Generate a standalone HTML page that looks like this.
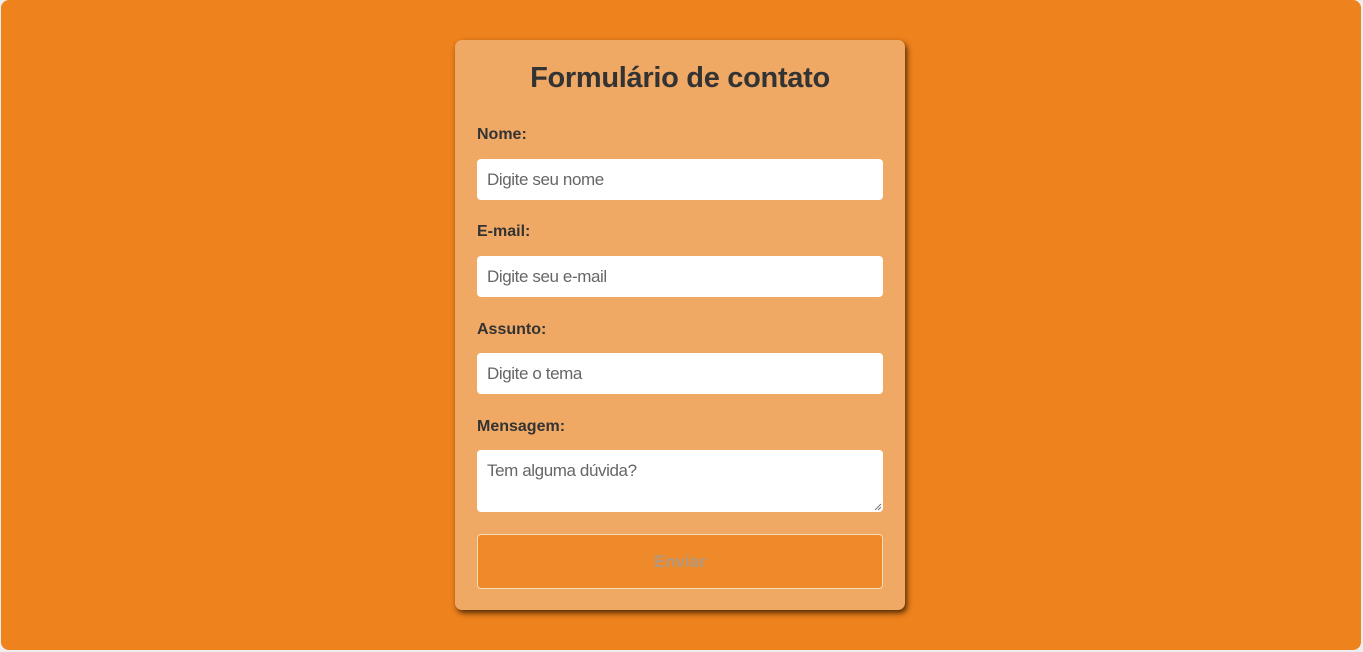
<!DOCTYPE html>
<html><head><style>
html,body{margin:0;padding:0;width:1363px;height:652px;background:#eeeeee;overflow:hidden;font-family:"Liberation Sans",sans-serif;}
.bg{position:absolute;left:1px;top:0;width:1360px;height:650px;background:#ee821c;border-radius:8px;}
.card{position:absolute;left:455px;top:40px;width:450px;height:570px;background:#efa965;border-radius:7px;box-shadow:2px 3px 6px rgba(50,25,0,.85);}
h1{position:absolute;left:0;width:450px;top:22px;margin:0;text-align:center;font-size:29px;font-weight:bold;color:#333;letter-spacing:-0.3px}
.l{position:absolute;left:22px;font-size:16px;font-weight:bold;color:#333;}
.i{position:absolute;left:22px;width:406px;height:41px;background:#fff;border-radius:4px;box-sizing:border-box;padding:0 10px;font-size:17px;color:#666;line-height:42px;letter-spacing:-0.4px}
.btn{position:absolute;left:22px;top:494px;width:406px;height:55px;box-sizing:border-box;border:1px solid #f8dcb8;border-radius:4px;background:#ee8a2a;color:#b3997d;font-size:17px;font-weight:bold;text-align:center;line-height:53px}
</style></head><body>
<div class="bg"></div>
<div class="card">
<h1>Formulário de contato</h1>
<div class="l" style="top:86px">Nome:</div>
<div class="i" style="top:119px">Digite seu nome</div>
<div class="l" style="top:183px">E-mail:</div>
<div class="i" style="top:216px">Digite seu e-mail</div>
<div class="l" style="top:281px">Assunto:</div>
<div class="i" style="top:313px">Digite o tema</div>
<div class="l" style="top:378px">Mensagem:</div>
<div class="i" style="top:410px;height:62px;line-height:normal;padding-top:11px">Tem alguma dúvida?
<svg style="position:absolute;right:1px;bottom:1px" width="8" height="8"><path d="M1 7L7 1M4 7L7 4" stroke="#777" stroke-width="1"/></svg></div>
<div class="btn">Enviar</div>
</div>
</body></html>
